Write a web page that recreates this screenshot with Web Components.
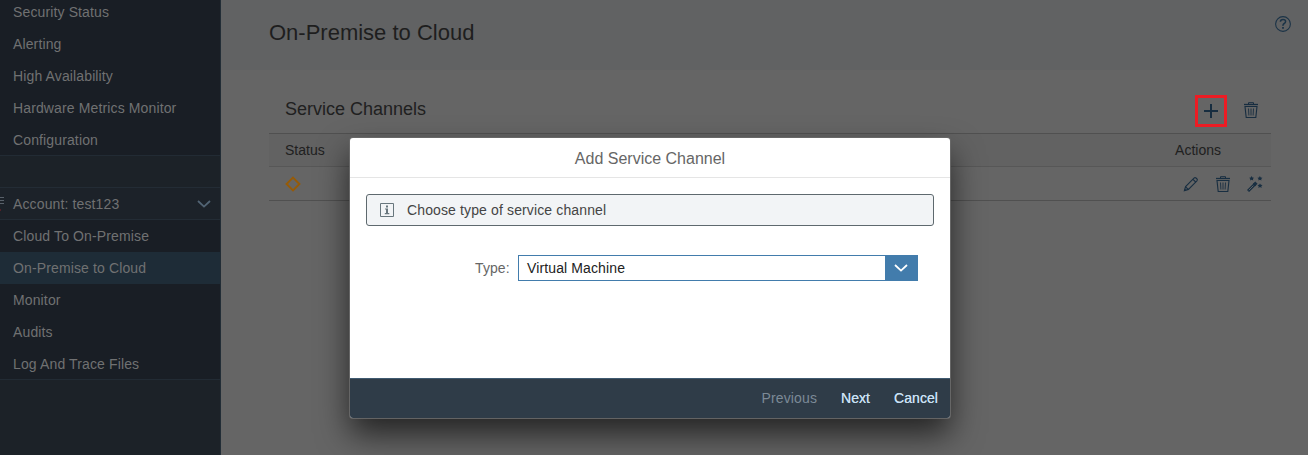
<!DOCTYPE html>
<html lang="en">
<head>
<meta charset="utf-8">
<title>Cloud Connector</title>
<style>
html,body{margin:0;height:100%;overflow:hidden}
body{font-family:"Liberation Sans",Arial,sans-serif;font-size:14px;background:#656565}
</style>
</head>
<body>
<cc-app></cc-app>
<script>
const icons = {
  plus: ['0 0 16 16', '<path d="M8 1v14M1 8h14" stroke="currentColor" stroke-width="2" fill="none"/>'],
  trash: ['0 0 16 16', '<g fill="none" stroke="currentColor"><path d="M1 2.5h14" stroke-width="1.3"/><path d="M5.5 2V.7h5V2"/><path d="M2 4.5h12L12.8 15.5H3.2z" stroke-width="1.1"/><path d="M5.5 6.5l.4 7M8 6.5v7M10.5 6.5l-.4 7" stroke-width=".9"/></g>'],
  pencil: ['0 0 16 16', '<g fill="none" stroke="currentColor" stroke-width="1.1"><path d="M1.4 14.6l1.2-4L11 2.2q1-1 2-.2l1 1q.9.9-.1 1.9L5.4 13.4z"/><path d="M10 3.3l2.7 2.7M2.6 10.8l2.6 2.6"/></g><path d="M1 15l.8-2.3 1.5 1.5z" fill="currentColor"/>'],
  wand: ['0 0 16 16', '<path d="M1 15L7.8 8.2" stroke="currentColor" stroke-width="3" fill="none"/><path d="M1.8 14.2L6.4 9.6" stroke="#656565" stroke-width=".9" fill="none"/><path d="M7 9l2.4-2.4" stroke="currentColor" stroke-width="3.2"/><g fill="currentColor"><path d="M4.6.1l.8 1.4 1.6.2-1.1 1.2.3 1.7-1.6-.8-1.6.8.3-1.7-1.1-1.2 1.6-.2z"/><path d="M12.9.1l.8 1.4 1.7.2-1.2 1.2.3 1.7-1.6-.8-1.6.8.3-1.7-1.2-1.2 1.7-.2z"/><path d="M13 7.4l.8 1.4 1.7.2-1.2 1.2.3 1.7-1.6-.8-1.6.8.3-1.7-1.2-1.2 1.7-.2z"/></g>'],
  help: ['0 0 16 16', '<circle cx="8" cy="8" r="7.4" fill="none" stroke="currentColor" stroke-width="1.1"/><path d="M5.4 5.8q0-2.3 2.6-2.3t2.6 2q0 1.2-1.4 2T8 9.8" fill="none" stroke="currentColor" stroke-width="1.5"/><path d="M7.1 11h1.8v1.8H7.1z" fill="currentColor"/>'],
  info: ['0 0 14 14', '<path d="M.5.5h13v13H.5z" fill="none" stroke="currentColor"/><path d="M6 2.5h2v2H6zM5 5.5h3V10h1.3v1.2H4.8V10H6V6.6H5z" fill="currentColor"/>'],
  diamond: ['0 0 16 16', '<path d="M8 1.6L14.4 8 8 14.4 1.6 8z" fill="none" stroke="currentColor" stroke-width="2"/>'],
  chevron: ['0 0 14 8', '<path d="M1 1l6 5.6L13 1" fill="none" stroke="currentColor" stroke-width="1.8"/>']
};

function define(name, html) {
  const template = document.createElement('template');
  template.innerHTML = html;
  customElements.define(name, class extends HTMLElement {
    constructor() {
      super();
      this.attachShadow({mode: 'open'}).append(template.content.cloneNode(true));
    }
  });
}

customElements.define('cc-icon', class extends HTMLElement {
  connectedCallback() {
    if (this.shadowRoot) return;
    const [box, body] = icons[this.getAttribute('name')];
    this.attachShadow({mode: 'open'}).innerHTML =
      `<style>:host{display:block;flex:none;width:16px;height:16px}svg{display:block;width:100%;height:100%}</style><svg viewBox="${box}" aria-hidden="true">${body}</svg>`;
  }
});

define('cc-nav-item', `<style>
:host{display:flex;align-items:center;box-sizing:border-box;height:32px;padding:0 9px 0 13px;background:#191e25;color:#707172;letter-spacing:.13px;white-space:nowrap}
:host([selected]){background:#1e2c37}
:host([last]){border-bottom:1px solid #222b34;padding-top:1px}
:host([group]){background:#1c2229;border-top:1px solid #232c35;border-bottom:1px solid #232c35;height:33px;position:relative}
cc-icon{display:none;width:14px;height:8px;margin-left:auto;color:#526474}
:host([group]) cc-icon{display:block}
.mark{display:none;position:absolute;left:0;top:9px;width:4px;height:5px;border-top:1px solid #59616a;border-bottom:1px solid #59616a}
.mark::before{content:"";display:block;height:1px;margin-top:2px;background:#59616a}
.mark::after{content:"";position:absolute;top:11px;left:0;width:1px;height:2px;background:#522028}
:host([group]) .mark{display:block}
</style><span class="mark"></span><slot></slot><cc-icon name="chevron"></cc-icon>`);

define('cc-sidebar', `<style>
:host{display:flex;flex-direction:column;flex:none;box-sizing:border-box;width:221px;height:100%;background:#1c2228;border-right:1px solid #222d36}
.first{margin-top:-4px;margin-bottom:31px}
</style>
<div class="first">
<cc-nav-item>Security Status</cc-nav-item><cc-nav-item>Alerting</cc-nav-item><cc-nav-item>High Availability</cc-nav-item><cc-nav-item>Hardware Metrics Monitor</cc-nav-item><cc-nav-item last>Configuration</cc-nav-item>
</div>
<cc-nav-item group>Account: test123</cc-nav-item>
<cc-nav-item>Cloud To On-Premise</cc-nav-item><cc-nav-item selected>On-Premise to Cloud</cc-nav-item><cc-nav-item>Monitor</cc-nav-item><cc-nav-item>Audits</cc-nav-item><cc-nav-item last>Log And Trace Files</cc-nav-item>`);

define('cc-page-header', `<style>
:host{display:flex;box-sizing:border-box;height:70px;padding:0 17px 4px 48px;background:#616263;align-items:center;justify-content:space-between}
h1{margin:0;font-size:22px;font-weight:400;color:#1e1e1e}
cc-icon{color:#1b3347;margin-top:-18px}
</style><h1><slot></slot></h1><cc-icon name="help"></cc-icon>`);

define('cc-channels', `<style>
:host{display:block;margin:16px 37px 0 48px;color:#202020}
.bar,.head,.row{display:flex;align-items:center;justify-content:space-between;box-sizing:border-box;padding-left:16px}
.bar{height:48px;border-bottom:1px solid #505050;padding-right:12px}
h2{margin:0;font-size:18px;font-weight:400}
.tools{display:flex;align-items:center;gap:16px;color:#172d40}
.add{display:grid;place-items:center;box-sizing:border-box;width:32px;height:32px;margin-top:2px;border:3px solid #ed1c24}
.head{height:33px;background:#626262;border-bottom:1px solid #575757;padding-right:50px}
.row{height:34px;border-bottom:1px solid #505050;padding-right:8px}
.row cc-icon{color:#182e41}
.row .state{color:#965b08}
.actions{display:flex;gap:16px}
</style>
<div class="bar"><h2>Service Channels</h2><div class="tools"><div class="add"><cc-icon name="plus"></cc-icon></div><cc-icon name="trash"></cc-icon></div></div>
<div class="head"><span>Status</span><span>Actions</span></div>
<div class="row"><cc-icon class="state" name="diamond"></cc-icon><div class="actions"><cc-icon name="pencil"></cc-icon><cc-icon name="trash"></cc-icon><cc-icon name="wand"></cc-icon></div></div>`);

define('cc-dialog', `<style>
:host{position:absolute;left:350px;top:138px;display:flex;flex-direction:column;width:600px;height:280px;background:#fff;border-radius:3px;box-shadow:0 0 0 1px rgba(105,105,105,.9),0 16px 32px rgba(0,0,0,.65);overflow:hidden}
header{box-sizing:border-box;height:40px;flex:none;border-bottom:1px solid #e5e5e5;display:flex;align-items:center;justify-content:center;font-size:16px;color:#666;padding-top:2px}
main{flex:1;padding:16px}
footer{box-sizing:border-box;height:40px;flex:none;background:#2f3c48;border-top:1px solid #3f5a70;display:flex;align-items:center;justify-content:flex-end;gap:24px;padding:0 12px 2px 0;color:#c8e0f4;text-shadow:0 0 .5px #c8e0f4}
span{letter-spacing:.06px}
.off{color:#7c8a97;text-shadow:none;letter-spacing:.12px}
</style><header>Add Service Channel</header><main><slot></slot></main><footer><span class="off">Previous</span><span>Next</span><span>Cancel</span></footer>`);

define('cc-message', `<style>
:host{display:flex;align-items:center;gap:13px;box-sizing:border-box;height:32px;padding-left:13px;border:1px solid #5e696e;border-radius:3px;background:#f2f4f6;color:#444;letter-spacing:.13px}
cc-icon{width:14px;height:14px;color:#68767d}
</style><cc-icon name="info"></cc-icon><slot></slot>`);

define('cc-select', `<style>
:host{display:flex;align-items:center;margin:29px 16px 0 109px;height:26px}
label{width:43px;color:#666;white-space:nowrap;letter-spacing:.1px}
.box{display:flex;align-items:center;flex:1;box-sizing:border-box;height:26px;border:1px solid #427cac;padding-left:8px;color:#222;justify-content:space-between;letter-spacing:.12px}
.arrow{display:grid;place-items:center;width:32px;height:100%;background:#427cac;color:#fff}
.arrow cc-icon{width:14px;height:8px}
</style><label>Type:</label><div class="box"><slot></slot><span class="arrow"><cc-icon name="chevron"></cc-icon></span></div>`);

define('cc-app', `<style>
:host{display:flex;width:100%;height:100vh;position:relative;overflow:hidden;background:#656565}
.content{flex:1;min-width:0}
</style><cc-sidebar></cc-sidebar><div class="content"><cc-page-header>On-Premise to Cloud</cc-page-header><cc-channels></cc-channels></div>
<cc-dialog><cc-message>Choose type of service channel</cc-message><cc-select>Virtual Machine</cc-select></cc-dialog>`);
</script>
</body>
</html>
